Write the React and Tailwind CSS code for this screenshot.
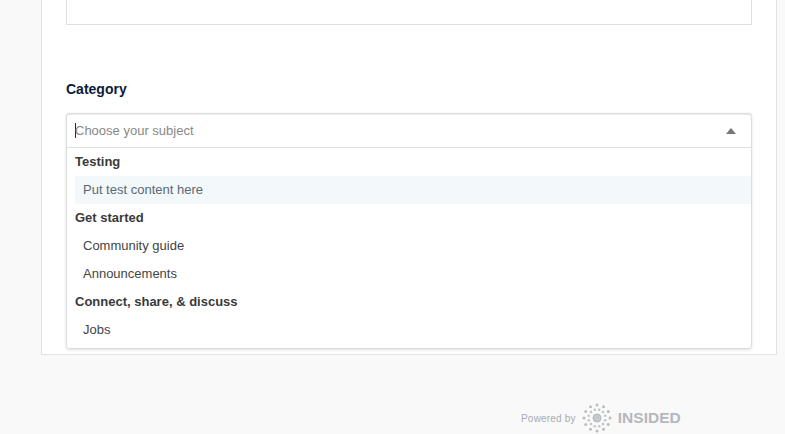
import React from 'react';

const groups = [
  { title: 'Testing', items: [{ label: 'Put test content here', active: true }] },
  { title: 'Get started', items: [{ label: 'Community guide' }, { label: 'Announcements' }] },
  { title: 'Connect, share, & discuss', items: [{ label: 'Jobs' }] },
];

const outer = Array.from({ length: 12 }, (_, i) => (i * 30 * Math.PI) / 180);
const middle = Array.from({ length: 12 }, (_, i) => ((i * 30 + 15) * Math.PI) / 180);

// dotted circle mark of the logo
const LogoMark = () => (
  <svg width="30" height="30" viewBox="0 0 30 30" className="shrink-0">
    {outer.map((a, i) => (
      <circle key={i} cx={15 + 13 * Math.cos(a)} cy={15 + 13 * Math.sin(a)} r="1.5" fill="#b9bdc0" />
    ))}
    {middle.map((a, i) => (
      <circle key={i} cx={15 + 8.5 * Math.cos(a)} cy={15 + 8.5 * Math.sin(a)} r="1.3" fill="#c2c5c8" />
    ))}
    <circle cx="15" cy="15" r="4" fill="#c6c9cc" stroke="#b4b8bb" strokeWidth="1" />
  </svg>
);

export default function App() {
  return (
    <div className="h-[434px] w-[785px] overflow-hidden bg-[#f9f9f9] font-['Liberation_Sans',Arial,sans-serif]">
      <div className="ml-[41px] h-[355px] w-[736px] border-x border-b border-[#e3e3e3] bg-white px-6">
        <div className="h-[25px] border-x border-b border-[#e0e0e0]" />

        <h2 className="mt-[56px] text-[14px] leading-4 font-bold text-[#0c1a3a]">Category</h2>

        <div className="mt-4 rounded-[3px] border border-[#dddddd] shadow-[0_1px_3px_rgba(0,0,0,0.12)]">
          <div className="flex h-[34px] items-center border-b border-[#dedede] pr-[15px] pl-2 shadow-[inset_0_1px_1px_rgba(0,0,0,0.08)]">
            <span className="-mr-px h-[15px] w-px bg-[#1c2740]" />
            <span className="flex-1 text-[13px] text-[#888888]">Choose your subject</span>
            <span className="h-0 w-0 border-x-[5px] border-b-[6px] border-x-transparent border-b-[#777777]" />
          </div>
          <div className="pb-[4px] pl-2">
            {groups.map((group) => (
              <div key={group.title}>
                <div className="flex h-7 items-center text-[13px] font-bold text-[#3a3a3a]">{group.title}</div>
                {group.items.map((item) => (
                  <div
                    key={item.label}
                    className={`flex h-7 items-center pl-2 text-[13px] ${item.active ? 'bg-[#f3f8fb] text-[#5a6876]' : 'text-[#444444]'}`}
                  >
                    {item.label}
                  </div>
                ))}
              </div>
            ))}
          </div>
        </div>
      </div>

      <div className="mt-[48px] ml-[521px] flex items-center">
        <span className="text-[10px] tracking-[0.2px] text-[#a8adb1]">Powered by</span>
        <span className="ml-[6px]"><LogoMark /></span>
        <span className="ml-[6px] text-[15.5px] font-bold text-[#b3b8bc]">INSIDED</span>
      </div>
    </div>
  );
}
